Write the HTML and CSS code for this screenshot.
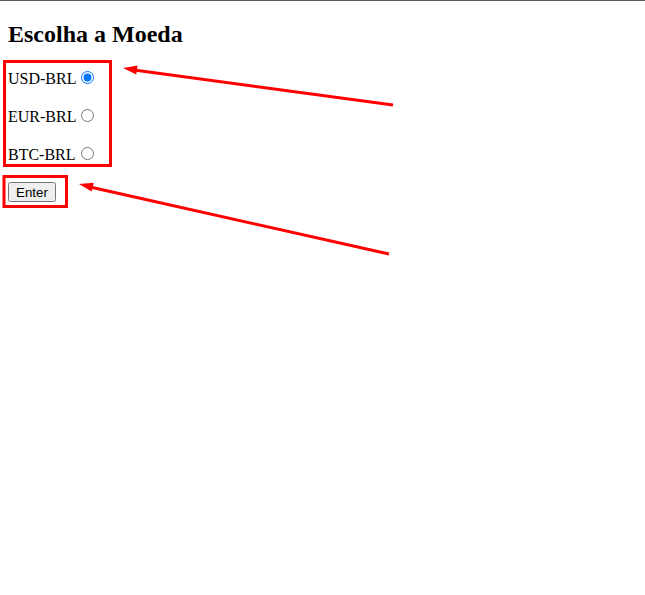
FILE: index.html
```html
<!DOCTYPE html>
<html lang="pt-BR">
<head>
<meta charset="utf-8">
<title>Escolha a Moeda</title>
<link rel="stylesheet" href="styles.css">
</head>
<body>
<h2 class="title">Escolha a Moeda</h2>
<form class="form">
  <label class="row">USD-BRL<input type="radio" name="moeda" value="USD-BRL" checked></label>
  <label class="row">EUR-BRL<input type="radio" name="moeda" value="EUR-BRL"></label>
  <label class="row">BTC-BRL<input type="radio" name="moeda" value="BTC-BRL"></label>
  <button type="button" class="btn">Enter</button>
</form>
<svg class="notes" width="645" height="595" viewBox="0 0 645 595" aria-hidden="true">
  <rect x="4.5" y="61.5" width="106" height="104" fill="none" stroke="#ff0000" stroke-width="3"/>
  <rect x="4" y="176.5" width="62.5" height="30" fill="none" stroke="#ff0000" stroke-width="3"/>
  <line x1="393" y1="105" x2="134" y2="70" stroke="#ff0000" stroke-width="3"/>
  <polygon points="123,68 137.5,65.4 136.3,74.4" fill="#ff0000"/>
  <line x1="389" y1="254" x2="90" y2="187" stroke="#ff0000" stroke-width="3"/>
  <polygon points="79,184 93.7,182.7 91.7,191.5" fill="#ff0000"/>
</svg>
</body>
</html>
```
FILE: styles.css
```css
html, body {
  margin: 0;
  padding: 0;
  background: #ffffff;
}
body {
  position: relative;
  width: 645px;
  height: 595px;
  border-top: 1px solid #5c5c5c;
  box-sizing: border-box;
  font-family: "Liberation Serif", "Times New Roman", serif;
  font-size: 16px;
  color: #000;
  overflow: hidden;
}
.title {
  margin: 19px 0 0 8px;
  font-size: 24px;
  line-height: 28px;
  font-weight: bold;
}
.form {
  display: flex;
  flex-direction: column;
  align-items: flex-start;
  gap: 18px;
  margin: 20px 0 0 0;
  padding-left: 8px;
}
.row {
  display: block;
  height: 20px;
  line-height: 20px;
}
.row input {
  margin: 3px 3px 0 5px;
  width: 13px;
  height: 13px;
  vertical-align: baseline;
}
.btn {
  font-family: "Liberation Sans", Arial, sans-serif;
  font-size: 13.33px;
  height: 20px;
  padding: 0 6px;
  margin: 0;
}
.notes {
  position: absolute;
  left: 0;
  top: -1px;
  pointer-events: none;
}
```
